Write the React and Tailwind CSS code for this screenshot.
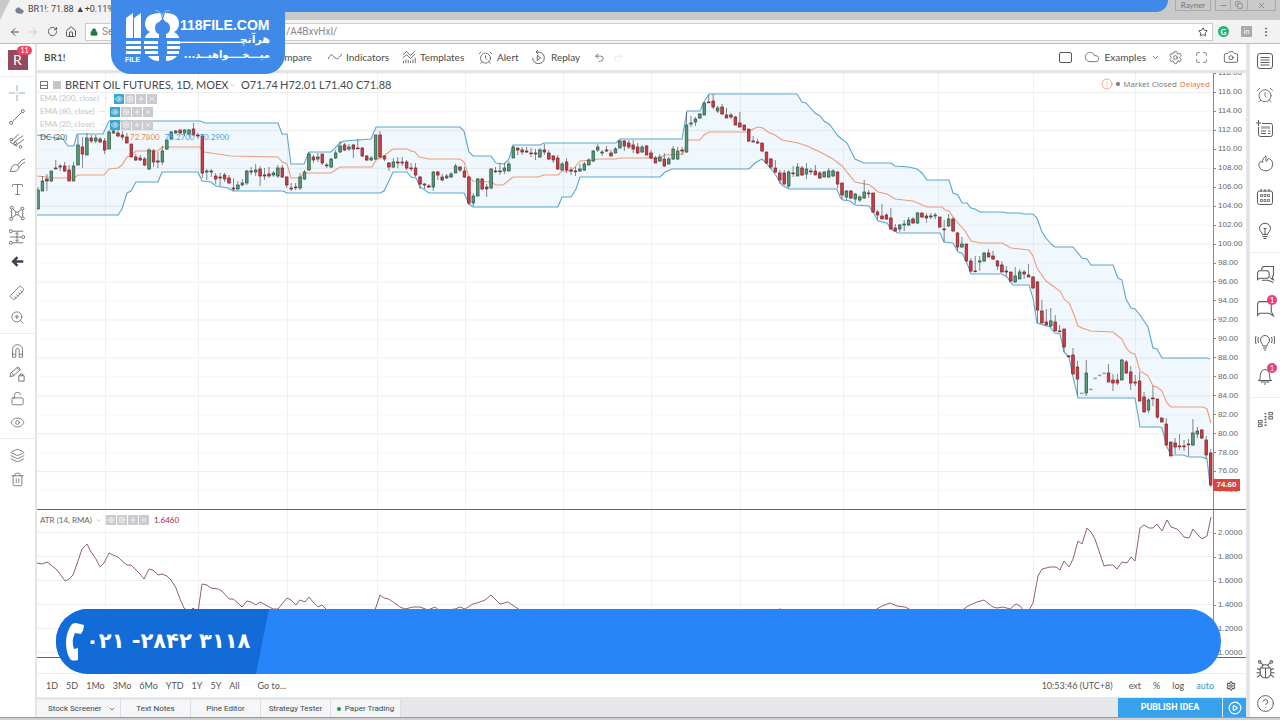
import { useState } from "react";
import {
  ArrowLeft,
  RotateCw,
  House,
  Lock,
  Star,
  EllipsisVertical,
  Minus,
  Copy,
  X,
  Type,
  Ruler,
  ZoomIn,
  LockOpen,
  Eye,
  Layers,
  Trash2,
  Settings,
  Maximize,
  Camera,
  Cloud,
  ChevronDown,
  AlarmClock,
  CirclePlay,
  CircleAlert,
  CircleQuestionMark,
  Undo2,
  Redo2,
  Plus,
} from "lucide-react";

/* ===========================
   CHART DATA
   every candle is [open, close, high, low]
   in chart units, y grows downwards
=========================== */

const candles = [
  [209,190,187,209],[191,181,176,191],[179,181,174,191],[181,171,171,182],[169,168,160,169],[166,167,164,171],
  [166,171,162,172],[170,181,165,181],[181,166,162,181],[165,145,135,165],[147,154,137,168],[155,138,133,155],
  [138,141,135,143],[141,138,135,143],[139,142,137,143],[141,150,138,154],[149,132,130,149],[133,131,128,134],
  [133,136,129,137],[135,137,131,140],[137,143,133,143],[144,157,144,157],[157,160,154,161],[158,160,155,161],
  [159,165,157,166],[169,150,148,170],[151,162,149,167],[161,162,152,168],[162,151,146,165],[149,140,140,150],
  [139,132,131,139],[133,131,130,134],[130,133,130,134],[133,130,129,136],[134,130,129,136],[129,135,123,136],
  [135,136,133,139],[136,173,135,178],[172,171,169,180],[171,172,169,177],[176,179,173,184],[177,178,173,186],
  [175,179,173,182],[178,183,175,184],[188,189,178,191],[189,185,181,190],[185,183,179,186],[183,171,170,185],
  [171,172,167,175],[172,170,164,176],[169,176,166,186],[175,176,168,180],[174,176,167,178],[175,173,171,177],
  [176,168,165,178],[168,177,165,178],[177,185,176,188],[188,189,183,191],[187,187,183,190],[188,177,173,190],
  [179,172,170,180],[170,154,152,171],[157,160,155,163],[159,157,153,162],[154,163,154,165],[165,165,163,168],
  [167,159,158,168],[158,153,150,159],[152,146,141,153],[145,150,143,151],[149,147,144,151],[145,149,144,158],
  [148,148,139,149],[148,156,147,157],[156,160,155,161],[160,158,156,161],[159,135,135,160],[135,157,131,158],
  [156,159,155,161],[163,167,162,171],[167,162,158,168],[162,163,157,168],[162,163,157,166],[162,168,160,170],
  [168,168,163,171],[168,175,163,177],[177,184,176,189],[184,185,183,189],[186,187,184,188],[187,172,171,191],
  [172,175,171,180],[177,180,174,181],[178,176,174,179],[177,174,172,178],[173,166,164,173],[167,170,166,172],
  [171,177,167,178],[177,203,176,205],[203,196,193,206],[196,179,178,196],[179,189,178,190],[187,189,184,197],
  [188,169,168,189],[171,171,167,173],[171,171,163,175],[171,168,163,174],[171,164,161,171],[158,147,146,158],
  [148,150,148,155],[150,152,147,155],[151,152,147,153],[153,153,148,157],[153,154,149,160],[157,150,148,158],
  [150,152,144,155],[153,159,150,160],[156,160,155,163],[158,169,155,170],[170,164,162,171],[162,170,158,173],
  [170,171,167,175],[171,171,167,176],[171,169,164,172],[170,164,162,171],[165,160,158,165],[161,151,150,162],
  [150,147,144,152],[153,152,150,156],[150,151,146,152],[153,156,150,156],[153,149,147,153],[148,141,140,148],
  [141,146,140,151],[143,147,140,149],[145,149,140,153],[147,153,143,154],[152,147,145,153],[146,155,145,155],
  [153,158,150,159],[158,163,156,163],[161,157,154,162],[159,166,153,167],[164,159,157,164],[159,149,146,160],
  [159,151,147,160],[150,151,147,155],[152,125,112,153],[124,123,116,127],[122,119,117,126],[118,114,113,119],
  [115,103,102,115],[102,102,95,103],[101,107,94,109],[111,108,106,113],[107,114,104,115],[115,118,108,118],
  [115,117,113,119],[117,125,116,125],[123,127,112,127],[125,130,125,131],[129,141,129,142],[141,142,136,142],
  [142,143,139,144],[143,151,143,152],[152,163,152,164],[159,167,158,169],[168,172,160,173],[173,180,170,184],
  [173,184,170,185],[186,172,170,188],[173,173,166,177],[176,167,163,176],[168,175,166,176],[174,169,163,179],
  [171,171,168,175],[171,175,165,175],[173,178,171,179],[177,172,171,177],[177,171,168,178],[176,171,169,177],
  [172,184,171,188],[183,195,183,199],[197,191,190,200],[191,198,190,199],[199,194,193,204],[200,197,195,202],
  [198,192,180,199],[193,193,190,198],[193,212,193,213],[212,215,210,220],[216,219,204,219],[215,219,213,220],
  [218,229,208,229],[228,231,224,231],[229,225,224,232],[225,224,220,231],[225,220,217,226],[219,223,217,224],
  [223,213,212,224],[213,217,213,218],[216,218,213,223],[217,216,213,219],[216,215,213,219],[217,227,217,228],
  [229,229,220,242],[226,219,214,227],[219,231,217,232],[233,247,232,251],[247,244,237,248],[244,261,244,261],
  [261,271,258,272],[271,271,256,272],[262,261,256,271],[261,253,252,262],[253,257,249,257],[256,259,251,260],
  [261,266,260,270],[265,272,261,272],[271,272,266,276],[272,281,272,282],[282,276,267,283],[279,272,269,279],
  [272,274,270,279],[275,277,264,277],[277,288,276,289],[282,310,281,323],[311,323,300,323],[322,325,309,325],
  [326,321,308,327],[322,331,315,331],[331,331,325,332],[329,347,329,352],[356,356,355,357],[355,374,348,374],
  [367,379,361,395],[393,393,393,393],[393,373,360,396],[389,389,389,389],[378,378,378,378],[375,375,375,375],
  [373,373,373,373],[373,382,364,382],[380,383,374,391],[380,383,374,385],[380,360,359,380],[362,373,360,374],
  [372,383,366,390],[382,383,375,386],[381,401,372,401],[397,412,392,412],[410,400,398,413],[398,398,386,406],
  [399,417,399,419],[418,422,418,422],[424,445,418,446],[442,456,442,456],[443,447,438,454],[446,446,434,450],
  [446,446,440,451],[444,444,439,456],[445,433,419,446],[434,431,427,438],[430,438,429,439],[440,455,436,459],
  [453,485,449,487],
];

const upperBand =
  "37,135 63,139 68,146 74,146 77,134 103,134 109,121 200,121 205,123 278,123 282,134 287,134 291,164 304,164 309,152 331,152 340,143 344,141 358,140 371,139 376,127 460,127 464,131 469,152 473,156 491,156 496,163 504,164 509,159 513,145 540,145 544,143 616,143 620,139 682,139 687,111 700,111 704,102 709,94 797,94 802,102 806,103 815,113 820,116 824,121 829,124 833,129 838,136 847,143 851,151 855,159 864,163 891,163 895,166 909,167 917,169 922,173 927,180 949,180 953,193 958,195 962,203 967,203 971,208 975,209 980,212 1002,212 1007,213 1020,213 1024,214 1033,214 1037,218 1042,232 1046,238 1051,244 1055,247 1073,247 1082,258 1087,259 1091,265 1113,265 1118,278 1122,280 1126,299 1131,308 1135,309 1140,315 1148,327 1153,348 1157,349 1162,358 1207,358 1210,359";

const lowerBand =
  "37,215 118,215 122,209 127,193 131,191 136,182 158,182 162,172 198,172 202,181 211,182 216,186 228,188 233,191 283,191 287,193 380,193 384,191 389,181 393,172 407,172 411,177 416,178 420,187 429,193 464,193 469,204 473,207 558,207 562,197 571,197 576,189 580,177 660,177 665,172 672,169 749,169 755,163 762,159 767,164 775,174 782,185 789,189 837,189 840,197 843,200 850,201 855,205 869,206 873,212 878,221 887,223 891,229 898,233 940,233 944,242 953,243 958,252 962,253 967,263 971,274 1002,274 1007,277 1011,283 1013,285 1029,285 1033,298 1037,323 1050,327 1055,333 1060,334 1064,352 1069,357 1073,377 1078,398 1135,398 1140,427 1160,427 1162,428 1167,447 1171,455 1183,455 1189,457 1202,457 1207,459 1210,485";

const lowerBandReversed = lowerBand.split(" ").reverse().join(" ");

const middleBand =
  "37,176 46,177 55,178 74,178 78,175 104,175 109,169 118,168 122,165 127,157 131,156 136,151 158,151 162,147 200,147 204,152 211,153 231,156 278,157 282,162 287,164 291,178 300,178 304,173 331,173 340,167 372,167 376,160 384,156 389,152 393,149 407,149 411,151 415,152 419,157 429,159 460,159 464,162 469,177 473,181 491,182 496,185 503,185 508,181 513,177 538,177 544,175 558,175 562,171 571,171 576,166 580,161 593,160 598,159 616,159 620,158 660,158 665,155 683,154 688,140 700,140 704,135 709,132 749,132 753,129 758,127 763,128 768,132 775,135 782,140 798,143 807,146 820,152 833,159 842,166 855,182 870,185 878,192 887,194 895,199 913,201 927,207 942,207 945,210 949,211 953,217 958,223 965,231 971,241 980,243 1002,243 1011,248 1029,250 1033,256 1037,268 1046,281 1060,291 1064,299 1069,303 1073,312 1078,326 1082,328 1091,331 1113,332 1118,336 1122,339 1126,348 1131,353 1135,354 1140,371 1148,376 1153,386 1157,387 1162,391 1167,403 1171,407 1203,407 1207,409 1211,423";

const atrLine =
  "37,563 42,564 47,562 51,565 56,569 60,574 65,581 69,579 73,575 78,561 82,549 87,544 91,552 96,559 100,567 104,563 109,553 113,555 118,557 122,561 127,565 131,565 136,570 140,574 144,579 149,569 153,570 158,575 162,574 167,576 171,580 176,588 180,599 184,608 189,612 193,608 198,612 202,584 207,585 211,588 218,589 222,591 229,599 233,599 238,603 242,607 247,601 251,602 256,605 260,602 264,604 273,609 278,609 282,604 287,598 291,600 296,605 300,600 305,602 309,597 313,602 318,607 322,605 327,610 350,614 375,610 380,595 384,598 389,599 393,602 400,607 405,609 413,607 420,607 428,610 435,607 440,611 455,609 460,607 465,609 473,604 480,602 485,600 491,595 500,604 508,602 520,610 560,616 640,618 760,614 780,609 800,615 870,613 882,606 890,603 897,606 905,607 913,611 940,613 960,612 968,606 977,602 984,600 993,607 997,608 1003,607 1010,609 1016,604 1020,606 1024,611 1029,610 1033,603 1038,576 1042,569 1050,567 1056,567 1060,570 1064,561 1069,567 1073,559 1078,541 1082,544 1087,528 1091,532 1095,539 1104,566 1108,565 1113,565 1117,569 1122,562 1127,563 1131,557 1135,561 1140,528 1144,525 1149,528 1153,528 1157,524 1162,531 1167,520 1171,527 1177,529 1180,532 1184,537 1189,538 1193,529 1198,535 1202,539 1207,536 1211,517";

const priceLabels = [];
for (let p = 118; p >= 74; p -= 2) {
  priceLabels.push(p.toFixed(2));
}

const atrLabels = ["2.0000", "1.8000", "1.6000", "1.4000", "1.2000", "1.0000"];

const monthLines = [105, 198, 287, 377, 465, 563, 651, 740, 843, 938, 1033, 1135];

/* ===========================
   CUSTOM ICONS
=========================== */

function Icon({ children, size = 16, view = 18, className = "" }) {
  return (
    <svg
      width={size}
      height={size}
      viewBox={`0 0 ${view} ${view}`}
      fill="none"
      stroke="currentColor"
      strokeWidth="1"
      className={`shrink-0 ${className}`}
      aria-hidden="true"
    >
      {children}
    </svg>
  );
}

const CrosshairIcon = () => (
  <Icon className="text-[#7fa6b8]">
    <path d="M9 0v7M9 11v7M0 9h7M11 9h7M8.500 9h1" />
  </Icon>
);

const TrendIcon = () => (
  <Icon>
    <circle cx="2.5" cy="15.5" r="1.7" />
    <circle cx="15.5" cy="2.5" r="1.7" />
    <path d="M4 14 14 4" />
  </Icon>
);

const ForkIcon = () => (
  <Icon>
    <path d="M3 9 11 1M5.500 10.500 16 3M8 14l9-7M1 10l8 5" />
    <circle cx="2.500" cy="7.500" r="1.500" />
    <circle cx="13" cy="15.500" r="1.500" />
    <circle cx="7" cy="11.500" r="1.500" />
  </Icon>
);

const BrushIcon = () => (
  <Icon>
    <path d="M1 16c2-1 1-4 3-6s5-2 6.500 0 .5 4-2 5.500S3 16 1 16ZM10 9l4-5 4-2M11.500 11l4-4 2.500-1" />
  </Icon>
);

const PatternIcon = () => (
  <Icon>
    <circle cx="3" cy="3" r="1.700" />
    <circle cx="15" cy="4" r="1.700" />
    <circle cx="2.500" cy="15.500" r="1.700" />
    <circle cx="9" cy="9.500" r="1.700" />
    <circle cx="15.500" cy="15" r="1.700" />
    <path d="M3 5v9M4 4l4 4M10 8l4-3M4 14l4-3M10 11l4 3M15.500 6v7" />
  </Icon>
);

const ForecastIcon = () => (
  <Icon>
    <circle cx="2" cy="2.500" r="1.700" />
    <circle cx="2" cy="15.500" r="1.700" />
    <circle cx="16" cy="9" r="1.700" />
    <path d="M4 2.500h12M4 15.500h12M1 9h13M9 4v10M7 6l2-2 2 2M7 12l2 2 2-2" />
  </Icon>
);

const BackIcon = () => (
  <Icon size={13} className="text-[#40444f]">
    <path d="M17 9H3M9 3 3 9l6 6" strokeWidth="3.500" />
  </Icon>
);

const RulerIcon = () => <Ruler size={16} strokeWidth={1.200} className="rotate-90" />;

const MagnetIcon = () => (
  <Icon size={15}>
    <path d="M3 17V8a6 6 0 0 1 12 0v9h-4V8.500a2 2 0 0 0-4 0V17zM3 13.500h4M11 13.500h4" />
  </Icon>
);

const PencilLockIcon = () => (
  <Icon>
    <path d="m1 12 1-4 8-7 3 3-8 7-4 1ZM3 8l3 3M9 2l3 3M11 11h6v6h-6zM12.500 11V9h3v2" />
  </Icon>
);

const ListIcon = () => (
  <Icon size={18}>
    <rect x="1.500" y="1.500" width="15" height="15" rx="2.500" />
    <path d="M4.500 5.500h9M4.500 8h9M4.500 10.500h9M4.500 13h9" />
  </Icon>
);

const NewsIcon = () => (
  <Icon size={18}>
    <path d="M6 3.500h8.500a2 2 0 0 1 2 2v9a2 2 0 0 1-2 2h-10a2 2 0 0 1-2-2V7M2.500 0v6M0 3h5" />
    <path d="M5 7.500h9" strokeWidth="2.500" className="opacity-50" />
    <path d="M5 11h5M5 13.500h5M12 11h2.500M12 13.500h2.500" />
  </Icon>
);

const FireIcon = () => (
  <Icon size={17}>
    <path d="M9.500 1c.5 2.500-1 4.500.5 6L12 3.500c3.500 1 5 4 4.500 7A7.300 6.800 0 0 1 2 11c0-2 .8-3.500 2.500-4.500L6 8C5.500 5 7 2.500 9.500 1Z" />
  </Icon>
);

const CalendarIcon = () => (
  <Icon size={18}>
    <rect x="1.500" y="3" width="15" height="13.500" rx="2" />
    <path d="M5 1v3M9 1v3M13 1v3" />
    <path d="M4.500 6.500h2v2h-2zM8 6.500h2v2H8zM11.500 6.500h2v2h-2zM4.500 11.500h2v2h-2zM8 11.500h2v2H8zM11.500 11.500h2v2h-2z" strokeWidth="0.800" />
  </Icon>
);

const BulbIcon = () => (
  <Icon size={18}>
    <path d="M6.500 12.500c0-2-3-3-3-6.200a5.500 5 0 0 1 11 0c0 3.200-3 4.200-3 6.200zM6.500 14.500h5M7.500 16.500h3M7.500 6.500h3M9 6.500v6" />
  </Icon>
);

const ChatsIcon = () => (
  <Icon size={19}>
    <path d="M5.500 5V3L7 1.500h9.500v8.500l-1 1 1 3-3.500-2" />
    <path d="M3 5.500h8l1.500 1.500v4l-1.500 1.500H3.500l-2 1.500V7zM5.500 14.500h6l5 2" />
  </Icon>
);

const ChatIcon = () => (
  <Icon size={19}>
    <path d="M3 2.500h11.500v9.500l2 4-4-2.500H3.500l-2 2V4z" />
  </Icon>
);

const IdeasIcon = () => (
  <Icon size={20} view={20}>
    <path d="M8 14c0-2-2.500-3-2.500-6a4.500 4.500 0 0 1 9 0c0 3-2.500 4-2.500 6zM8 16h4M9 18h2M3.500 5q-1.500 3 0 6M1 4q-1.500 4 0 8M16.500 5q1.500 3 0 6M19 4q1.500 4 0 8" />
  </Icon>
);

const BellIcon = () => (
  <Icon size={18}>
    <path d="M2 13.500h14M3.500 13.500c1-2 .5-4 1-6.500S7 2.500 9 2.500 13 4.500 13.500 7s0 4.500 1 6.500M4.500 15h9M8 17h2" />
  </Icon>
);

const DomIcon = () => (
  <Icon size={17}>
    <path d="M1.500 10h4v2.500h-4zM1.500 14h4v2.500h-4zM12.500 1.500h4V4h-4zM12.500 6h4v2.500h-4z" />
    <path d="M8 3h2M8 6h2M8 9h2M8 12h2M8 15h2" strokeWidth="1.500" />
  </Icon>
);

const BugIcon = () => (
  <Icon size={19}>
    <path d="M4 7.500h10v5a5 4.500 0 0 1-10 0zM5.500 7.500a3.500 3 0 0 1 7 0M9 7.500V17M4 9.500 1 8M4 12H.5M4 14l-3 2.500M14 9.500 17 8M14 12h3.500M14 14l3 2.500M7 5 4.500 2.500M11 5l2.500-2.500" />
    <circle cx="3.500" cy="1.800" r="1.200" />
    <circle cx="14.500" cy="1.800" r="1.200" />
  </Icon>
);

const WaveIcon = () => (
  <Icon size={14}>
    <path d="M0 12c3-7 5-7 8-3s5 3 10-4" />
  </Icon>
);

const TemplatesIcon = () => (
  <Icon size={14}>
    <path d="m1 6 5-4 5 5 6-6M1 10l5-4 5 5 6-6M2 14v3M5 12v5M8 13v4M11 14v3M14 12v5M17 10v7" />
  </Icon>
);

const ReplayIcon = () => (
  <Icon size={15}>
    <path d="M6 2.500h4a7 7 0 1 1-8 7M8.500 0 6 2.500 8.500 5M7.500 6.500v6l4-3z" />
  </Icon>
);

const leftGroups = [
  [
    ["Crosshair", CrosshairIcon],
    ["Trend Line", TrendIcon],
    ["Pitchfork", ForkIcon],
    ["Brush", BrushIcon],
    ["Text", Type],
    ["Patterns", PatternIcon],
    ["Forecast", ForecastIcon],
    ["Hide Toolbar", BackIcon],
  ],
  [
    ["Measure", RulerIcon],
    ["Zoom In", ZoomIn],
  ],
  [
    ["Magnet Mode", MagnetIcon],
    ["Stay in Drawing Mode", PencilLockIcon],
    ["Lock All", LockOpen],
    ["Hide All", Eye],
  ],
  [
    ["Object Tree", Layers],
    ["Remove", Trash2],
  ],
];

const rightGroups = [
  [
    ["Watchlist", ListIcon],
    ["Alerts", AlarmClock],
    ["News", NewsIcon],
    ["Hotlists", FireIcon],
    ["Calendar", CalendarIcon],
    ["My Ideas", BulbIcon],
  ],
  [
    ["Public Chats", ChatsIcon],
    ["Private Chats", ChatIcon, 1],
    ["Ideas Stream", IdeasIcon],
    ["Notifications", BellIcon, 1],
  ],
  [["Depth of Market", DomIcon]],
];

/* ===========================
   BROWSER
=========================== */

function BrowserBar() {
  return (
    <header className="shrink-0">
      <div className="flex h-5 items-start justify-between bg-[#c9c9c9]">
        <div className="flex h-5 w-60 items-center gap-1 bg-[#f2f2f2] pl-[15px] font-[Roboto,sans-serif] text-[9px] text-[#444] [clip-path:polygon(10px_0,100%_0,100%_100%,0_100%)]">
          <Cloud size={9} fill="#4b8fc4" className="text-[#c55]" />
          BR1!: 71.88 ▲+0.11% —
        </div>
        <div className="flex h-[11px] items-center text-[#777]">
          <button className="mr-1 h-full w-9 border border-t-0 border-[#aaa] text-[8px] leading-none">
            Rayner
          </button>
          <button aria-label="Minimize" className="flex h-full w-4 items-center justify-center border border-t-0 border-[#aaa]">
            <Minus size={9} />
          </button>
          <button aria-label="Restore" className="flex h-full w-[17px] items-center justify-center border-r border-b border-[#aaa]">
            <Copy size={8} />
          </button>
          <button aria-label="Close" className="mr-1 flex h-full w-7 items-center justify-center border-r border-b border-[#aaa]">
            <X size={9} />
          </button>
        </div>
      </div>

      <div className="flex h-6 items-center gap-1 border-b border-[#bbb] bg-[#f2f2f2] px-2 text-[#555]">
        <button aria-label="Back" className="px-px">
          <ArrowLeft size={12} />
        </button>
        <button aria-label="Forward" className="px-px text-[#ccc]">
          <ArrowLeft size={12} className="rotate-180" />
        </button>
        <button aria-label="Reload" className="px-[3px]">
          <RotateCw size={11} />
        </button>
        <button aria-label="Home">
          <House size={12} />
        </button>
        <label className="ml-1 flex h-[18px] flex-1 items-center gap-1 border border-[#ccc] bg-white px-1 font-[Roboto,sans-serif] text-[10px] text-[#888]">
          <Lock size={8} fill="#1b7a3d" className="shrink-0 text-[#1b7a3d]" />
          <span className="w-[180px]">Se</span>
          <input
            aria-label="Address"
            defaultValue="/A4BxvHxI/"
            className="min-w-0 flex-1 outline-none"
          />
          <Star size={10} className="text-[#333]" />
        </label>
        <span className="ml-px flex size-[11px] items-center justify-center rounded-full bg-[#23b574] text-[8px] font-bold text-white">
          G
        </span>
        <span className="mr-1 ml-2 flex size-[11px] items-center justify-center bg-[#aaa] text-[7px] text-white">
          in
        </span>
        <button aria-label="Menu">
          <EllipsisVertical size={12} />
        </button>
      </div>
    </header>
  );
}

/* ===========================
   SIDEBARS
=========================== */

function LeftTools() {
  return (
    <nav className="flex w-[37px] shrink-0 flex-col border-r-2 border-[#e4e4e6] bg-white text-[#666]">
      <div className="mb-1 flex h-[33px] items-center justify-center border-b border-[#eee]">
        <div className="relative flex size-5 items-center justify-center bg-[#954a5e] text-sm text-white">
          R
          <span className="absolute -top-1 -right-1 rounded-full bg-[#f0435f] px-[3px] text-[7px] leading-[9px]">
            11
          </span>
        </div>
      </div>
      {leftGroups.map((group, g) => (
        <div
          key={g}
          className={
            g < 2
              ? "flex flex-col pb-2 last:border-0"
              : "-mt-1 mb-1 flex flex-col border-t border-[#eee] py-1"
          }
        >
          {group.map(([label, Glyph]) => (
            <button key={label} aria-label={label} className="flex h-6 w-[34px] items-center justify-center">
              <Glyph size={15} strokeWidth={1.300} />
            </button>
          ))}
        </div>
      ))}
    </nav>
  );
}

function RightTools() {
  return (
    <nav className="flex w-[34px] shrink-0 flex-col border-l-4 border-[#e4e4e6] bg-white text-[#5a5a5a]">
      {rightGroups.map((group, g) => (
        <div key={g} className="mb-1 flex flex-col border-b border-[#eee] pb-1 nth-3:border-0">
          {group.map(([label, Glyph, count]) => (
            <button key={label} aria-label={label} className="relative flex h-[34px] items-center justify-center">
              <Glyph size={18} strokeWidth={1.100} />
              {count && (
                <span className="absolute top-1 right-[3px] size-[10px] rounded-full bg-[#ee3e78] text-[8px] leading-[10px] text-white">
                  {count}
                </span>
              )}
            </button>
          ))}
        </div>
      ))}
      <div className="mt-auto flex flex-col">
        <button aria-label="Report a Bug" className="flex h-10 items-center justify-center">
          <BugIcon />
        </button>
        <button aria-label="Help" className="flex h-7 items-center justify-center">
          <CircleQuestionMark size={19} strokeWidth={1.200} />
        </button>
      </div>
    </nav>
  );
}

/* ===========================
   CHART TOOLBAR
=========================== */

function ChartToolbar() {
  return (
    <div className="flex h-[29px] shrink-0 items-center border-b-3 border-[#e4e4e6] text-[10px] text-[#4a4a4a]">
      <button className="w-[226px] pl-[7px] text-left font-semibold">BR1!</button>
      <button className="w-[65px] pl-[9px] text-left">Compare</button>
      <button className="flex w-[74px] items-center gap-1">
        <WaveIcon />
        Indicators
      </button>
      <button className="flex w-[76px] items-center gap-1">
        <TemplatesIcon />
        Templates
      </button>
      <button className="flex w-[53px] items-center gap-1">
        <AlarmClock size={15} strokeWidth={1.200} className="shrink-0" />
        Alert
      </button>
      <button className="flex w-[59px] items-center gap-[5px]">
        <ReplayIcon />
        Replay
      </button>
      <button aria-label="Undo" className="px-1">
        <Undo2 size={11} strokeWidth={1.500} />
      </button>
      <button aria-label="Redo" className="px-1 text-[#ddd]">
        <Redo2 size={11} strokeWidth={1.500} />
      </button>

      <div className="ml-auto flex items-center">
        <button aria-label="Select Layout" className="mr-3 h-[11px] w-[13px] rounded-xs border border-[#555]" />
        <button className="mr-2 flex items-center gap-1">
          <Cloud size={16} strokeWidth={1.100} strokeDasharray="2 1" />
          Examples
          <ChevronDown size={9} className="ml-px" />
        </button>
        <button aria-label="Chart Properties" className="mr-3">
          <Settings size={15} strokeWidth={1.200} />
        </button>
        <button aria-label="Fullscreen" className="mr-[15px]">
          <Maximize size={13} strokeWidth={1.300} />
        </button>
        <button aria-label="Take a Snapshot" className="mr-[7px]">
          <Camera size={16} strokeWidth={1.200} />
        </button>
      </div>
    </div>
  );
}

/* ===========================
   CHART PANES
=========================== */

function LegendButtons({ active }) {
  return (
    <span className="flex gap-px text-white">
      <button aria-label="Hide" className={active ? "bg-[#35a7d3] p-px" : "bg-[#cbcbcf] p-px"}>
        <Eye size={8} />
      </button>
      <button aria-label="Format" className="bg-[#cbcbcf] p-px">
        <Settings size={8} />
      </button>
      <button aria-label="Add" className="bg-[#cbcbcf] p-px">
        <Plus size={8} />
      </button>
      <button aria-label="Delete" className="bg-[#cbcbcf] p-px">
        <X size={8} />
      </button>
    </span>
  );
}

function Candles() {
  return candles.map(([open, close, high, low], i) => {
    const x = 38 + i * 4.442;
    const up = close < open;
    const top = Math.min(open, close);
    const flat = high === low;
    return (
      <g key={i}>
        <line x1={x} x2={x} y1={high} y2={low} stroke="#444" strokeWidth="0.8" opacity="0.8" />
        <rect
          x={x - 1.300}
          y={top}
          width="2.600"
          height={Math.max(Math.abs(open - close), 0.8)}
          fill={flat ? "#bbb" : up ? "#5a9a78" : "#d03c44"}
          stroke={flat ? "#999" : up ? "#27513c" : "#7a2227"}
          strokeWidth="0.7"
        />
      </g>
    );
  });
}

function PricePane() {
  return (
    <section className="relative flex min-h-0 flex-1 overflow-hidden">
      <svg
        className="h-full min-w-0 flex-1"
        viewBox="37 73 1176 436"
        preserveAspectRatio="none"
        role="img"
        aria-label="Brent oil futures price"
      >
        {priceLabels.map((label, i) => (
          <line
            key={label}
            x1="37"
            x2="1213"
            y1={73.5 + i * 18.960}
            y2={73.5 + i * 18.960}
            stroke={i % 2 ? "#ededed" : "#f6f6f6"}
          />
        ))}
        {monthLines.map((x) => (
          <line key={x} x1={x + 0.5} x2={x + 0.5} y1="73" y2="509" stroke="#f1f1f1" />
        ))}
        <polygon points={`${upperBand} ${lowerBandReversed}`} fill="#2f9fe0" opacity="0.07" />
        <polyline points={upperBand} fill="none" stroke="#5ba6cf" strokeWidth="1.100" />
        <polyline points={lowerBand} fill="none" stroke="#5ba6cf" strokeWidth="1.100" />
        <polyline points={middleBand} fill="none" stroke="#ee9c78" strokeWidth="1.100" />
        <Candles />
      </svg>

      <div className="w-[33px] shrink-0 border-l border-[#888] text-[8px] leading-none text-[#666]">
        <ul className="-mt-[9px] flex h-full flex-col font-['Liberation_Sans',sans-serif]">
          {priceLabels.map((label) => (
            <li key={label} className="flex flex-1 items-center gap-[2px]">
              <span className="h-px w-[2px] bg-[#888]"></span>
              {label}
            </li>
          ))}
        </ul>
      </div>

      <span className="absolute right-[6px] bottom-[18px] w-[27px] bg-[#d9453d] text-center font-['Liberation_Sans',sans-serif] text-[8px] leading-[12px] font-bold text-white">
        74.60
      </span>

      <div className="absolute top-[5px] left-[3px] flex flex-col text-[8px] leading-[13px] text-[#c4c4c8]">
        <div className="flex items-center gap-1 text-[11px] leading-[14px] text-[#4a4a4a]">
          <span className="flex h-2 w-2 items-center border border-[#777]">
            <span className="h-px w-full bg-[#777]"></span>
          </span>
          <span className="ml-px size-2 bg-[#c4c4c4]"></span>
          <h1 className="w-[160px] whitespace-nowrap">BRENT OIL FUTURES, 1D, MOEX</h1>
          <ChevronDown size={7} className="mr-px text-[#aaa]" />
          <span className="flex">
            <span className="w-[39px]">O71.74</span>
            <span className="w-[39px]">H72.01</span>
            <span className="w-[37px]">L71.40</span>
            <span>C71.88</span>
          </span>
        </div>
        <div className="flex items-center">
          <span className="w-[63px] whitespace-nowrap">EMA (200, close)</span>
          <ChevronDown size={7} className="mr-1" />
          <LegendButtons active />
        </div>
        <div className="flex items-center">
          <span className="w-[59px] whitespace-nowrap">EMA (60, close)</span>
          <ChevronDown size={7} className="mr-1" />
          <LegendButtons active />
        </div>
        <div className="flex items-center">
          <span className="w-[59px] whitespace-nowrap">EMA (20, close)</span>
          <ChevronDown size={7} className="mr-1" />
          <LegendButtons active />
        </div>
        <div className="flex items-center gap-[5px]">
          <span className="w-[85px] text-[#4d5a66]">DC (20)</span>
          <span className="text-[#f08a3c]">72.7800</span>
          <span className="text-[#45a2dd]">75.2700</span>
          <span className="text-[#45a2dd]">70.2900</span>
        </div>
      </div>

      <div className="absolute top-[5px] right-9 flex items-center gap-[3px] text-[8px] text-[#777]">
        <CircleAlert size={12} strokeWidth={1.500} className="text-[#f08a5c]" />
        <span className="size-1 rounded-full bg-[#777]"></span>
        <span className="font-['Open_Sans',sans-serif]">Market Closed</span>
        <span className="font-['Open_Sans',sans-serif] text-[#f0703c]">Delayed</span>
      </div>
    </section>
  );
}

function AtrPane() {
  return (
    <section className="relative flex h-[148px] shrink-0 border-t border-[#666]">
      <svg
        className="h-full min-w-0 flex-1"
        viewBox="37 510 1176 147"
        preserveAspectRatio="none"
        role="img"
        aria-label="Average true range"
      >
        {atrLabels.map((label, i) => (
          <line key={label} x1="37" x2="1213" y1={532.5 + i * 24} y2={532.5 + i * 24} stroke="#efefef" />
        ))}
        {monthLines.map((x) => (
          <line key={x} x1={x + 0.5} x2={x + 0.5} y1="510" y2="657" stroke="#f1f1f1" />
        ))}
        <polyline points={atrLine} fill="none" stroke="#94606c" strokeWidth="1" />
      </svg>
      <ul className="w-[33px] shrink-0 border-l border-[#888] pt-[11px] font-['Liberation_Sans',sans-serif] text-[8px] leading-none text-[#666]">
        {atrLabels.map((label) => (
          <li key={label} className="flex h-6 items-center gap-[2px]">
            <span className="h-px w-[2px] bg-[#888]"></span>
            {label}
          </li>
        ))}
      </ul>
      <div className="absolute top-1 left-[3px] flex items-center gap-1 text-[8px] leading-[12px] text-[#666]">
        <span className="w-[51px] whitespace-nowrap">ATR (14, RMA)</span>
        <ChevronDown size={7} className="text-[#aaa]" />
        <LegendButtons />
        <span className="ml-px text-[#a3243b]">1.6460</span>
      </div>
    </section>
  );
}

/* ===========================
   FOOTER BARS
=========================== */

function RangeBar() {
  const [auto, setAuto] = useState(true);

  return (
    <div className="flex h-6 shrink-0 items-center border-t border-[#eee] pl-[9px] text-[9px] text-[#555]">
      <div className="flex gap-2">
        {["1D", "5D", "1Mo", "3Mo", "6Mo", "YTD", "1Y", "5Y", "All"].map((range) => (
          <button key={range}>{range}</button>
        ))}
      </div>
      <button className="ml-[18px]">Go to...</button>
      <span className="mr-4 ml-auto">10:53:46 (UTC+8)</span>
      <button className="mr-3">ext</button>
      <button className="mr-3">%</button>
      <button className="mr-3">log</button>
      <button
        onClick={() => setAuto(!auto)}
        className={auto ? "mr-3 text-[#2e98dd]" : "mr-3"}
      >
        auto
      </button>
      <button aria-label="Scale Settings" className="mr-[10px]">
        <Settings size={10} strokeWidth={2.500} />
      </button>
    </div>
  );
}

function BottomTabs() {
  const tab = "flex w-[70px] items-center justify-center border-r border-[#dcdde0] bg-[#f5f6f8]";

  return (
    <div className="flex h-5 shrink-0 bg-[#e6e7ea] font-[Roboto,sans-serif] text-[8px] text-[#444]">
      <div className="flex pt-[3px]">
        <button className="flex w-[84px] items-center justify-between border-r border-[#dcdde0] bg-[#f5f6f8] pr-1 pl-[11px]">
          Stock Screener
          <ChevronDown size={8} />
        </button>
        <button className={tab}>Text Notes</button>
        <button className={tab}>Pine Editor</button>
        <button className={tab}>Strategy Tester</button>
        <button className={tab}>
          <span className="mr-1 size-1 rounded-full bg-[#1f9a3f]"></span>
          Paper Trading
        </button>
      </div>
      <div className="ml-auto flex gap-px pt-px text-white">
        <button className="w-[104px] bg-[#38a1ec] text-[9px] font-bold">PUBLISH IDEA</button>
        <button aria-label="Start Streaming" className="flex w-[23px] items-center justify-center bg-[#38a1ec]">
          <CirclePlay size={14} />
        </button>
      </div>
    </div>
  );
}

/* ===========================
   OVERLAYS
=========================== */

function LogoBanner() {
  return (
    <div className="absolute top-0 right-28 left-[111px] h-3 rounded-br-xl bg-[#3f8ae8]">
      <div className="flex h-[74px] w-[174px] items-center rounded-b-[20px] bg-[#3f8ae8] pl-[14px] text-white">
        <svg width="56" height="54" viewBox="0 0 56 54" fill="white" className="shrink-0" role="img" aria-label="118 File">
          <path d="M1 8 8 3v25H1zM9 8l7-5v25H9z" />
          <path d="M1 31h15v3H1zM1 36h15v3H1zM1 41h15v3H1z" />
          <path
            fillRule="evenodd"
            d="M36 3Q20 3 20 14q0 5 5 8-5 3-5 6h14v-4q-4-1-4-6t4-6l3-3ZM40 3q14 0 14 11 0 5-5 8 5 3 5 6H41v-4q4-1 4-6t-4-6l-3-3Z"
          />
          <path d="M19 31h14v3H19zM19 36h14v3H19zM20 41h13v3H20zM42 31h13v3H42zM42 36h13v3H42zM42 41h12v3H42zM23 46h11v5q-7 0-11-5ZM41 46h11q-4 5-11 5Z" />
          <path d="M30 0q6 1 7 7 1-6 8-7" fill="none" stroke="#9cc8ff" strokeWidth="1" />
          <text x="0" y="52" fontSize="7" fontWeight="700" fontFamily="Liberation Sans, sans-serif">FILE</text>
        </svg>
        <div className="-ml-px w-[90px] pt-1 whitespace-nowrap">
          <p className="font-['Liberation_Sans',sans-serif] text-[14px] leading-[16px] font-bold">118FILE.COM</p>
          <p dir="rtl" lang="fa" className="font-['DejaVu_Sans',sans-serif] text-[11px] leading-[14px] font-bold">
            هرآنچــــــــــــــــــ
          </p>
          <p dir="rtl" lang="fa" className="font-['DejaVu_Sans',sans-serif] text-[10px] leading-[15px] font-bold">
            میـــخــــواهیــد...
          </p>
        </div>
      </div>
    </div>
  );
}

function PhoneBanner() {
  return (
    <div className="absolute right-[59px] bottom-[46px] left-14 h-[65px] overflow-hidden rounded-[32px] bg-[#2785f9]">
      <div className="flex h-full w-[213px] items-center gap-[2px] bg-[#136bd8] pl-2 text-white [clip-path:polygon(0_0,100%_0,200px_100%,0_100%)]">
        <svg width="20" height="38" viewBox="0 0 20 38" fill="white" className="shrink-0" aria-hidden="true">
          <path d="M12 0 20 2q0 5-3 9l-6-1q-4 8-1 16l4-1v12q-4 1-7 0Q2 31 2 20T8 1q2-1 4-1Z" />
        </svg>
        <p lang="fa" dir="ltr" className="font-['DejaVu_Sans',sans-serif] text-[21px] font-bold whitespace-nowrap">
          ۰۲۱ -۲۸۴۲ ۳۱۱۸
        </p>
      </div>
    </div>
  );
}

function App() {
  return (
    <div className="relative flex h-screen flex-col overflow-hidden bg-white font-[Lato,'Open_Sans',sans-serif]">
      <BrowserBar />

      <div className="flex min-h-0 flex-1">
        <LeftTools />
        <main className="flex min-w-0 flex-1 flex-col">
          <ChartToolbar />
          <PricePane />
          <AtrPane />
          <div className="h-4 shrink-0 border-t border-[#666]"></div>
          <RangeBar />
          <BottomTabs />
        </main>
        <RightTools />
      </div>
      <div className="h-[3px] shrink-0 border-t border-[#999] bg-[#d0d0d0]"></div>

      <LogoBanner />
      <PhoneBanner />
    </div>
  );
}

export default App;
